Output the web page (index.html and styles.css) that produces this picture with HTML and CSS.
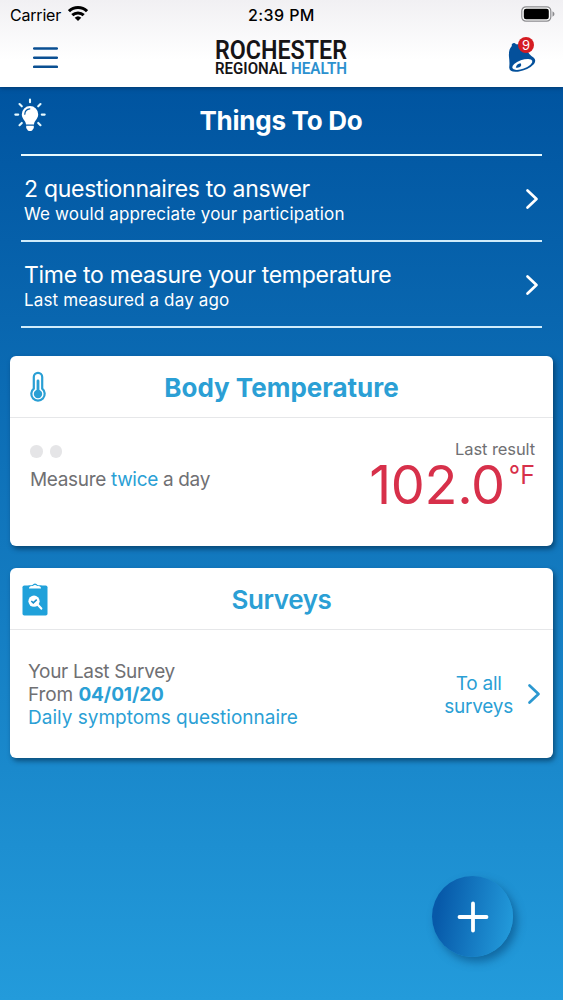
FILE: index.html
```html
<!DOCTYPE html>
<html lang="en">
<head>
  <meta charset="UTF-8">
  <meta name="viewport" content="width=device-width, initial-scale=1">
  <title>Things To Do</title>
  <link rel="stylesheet" href="styles.css">
</head>
<body>
  <header class="header">
    <div class="status-bar">
      <div class="carrier">
        <span>Carrier</span>
        <svg width="20" height="15" viewBox="0 0 20 15">
          <g fill="none" stroke="#000" stroke-width="3">
            <path d="M1 5.200a13 13 0 0 1 18 0"/>
            <path d="M4.300 9.200a8.200 8.200 0 0 1 11.400 0"/>
          </g>
          <path d="M6.700 11.800a4.800 4.800 0 0 1 6.600 0L10 15z"/>
        </svg>
      </div>
      <div class="clock">2:39 PM</div>
      <svg class="battery" width="34" height="16" viewBox="0 0 34 16">
        <rect x="0.800" y="0.800" width="29" height="14.400" rx="4.200" fill="#fff" stroke="#8b8b8e" stroke-width="1.200"/>
        <rect x="2.800" y="2.800" width="25" height="10.400" rx="2.200"/>
        <path d="M31.500 5.200q2 1 2 2.800t-2 2.800z" fill="#8b8b8e"/>
      </svg>
    </div>
    <div class="nav-bar">
      <svg class="menu" width="25" height="22" viewBox="0 0 25 22">
        <path d="M1.200 1.500h22.600M1.200 10.700h22.600M1.200 19.800h22.600" stroke="#0a4f92" stroke-width="2.600" stroke-linecap="round"/>
      </svg>
      <svg class="logo" width="134" height="40" viewBox="0 0 134 40">
        <text class="logo-text" x="0" y="21.200" font-size="26" textLength="132" lengthAdjust="spacingAndGlyphs">ROCHESTER</text>
        <text class="logo-text" x="0" y="36.400" font-size="16.500" textLength="72" lengthAdjust="spacingAndGlyphs">REGIONAL</text>
        <text class="logo-text logo-blue" x="76" y="36.400" font-size="16.500" textLength="56" lengthAdjust="spacingAndGlyphs">HEALTH</text>
      </svg>
      <div class="bell">
        <svg width="28" height="30" viewBox="0 0 28 30">
          <path d="M3.800 1.300Q6.200-1.300 8 1.300Q14 1 17.500 4.500Q20.500 11.500 25.500 14.500Q28.700 17 26 21Q20.500 27 10 28.700Q1.500 29.700 1.200 24.500Q1.800 20 1 14Q.3 6.500 3.800 3z" fill="#04509b"/>
          <ellipse cx="14.300" cy="21.400" rx="10.600" ry="4.400" transform="rotate(-20 14.300 21.400)" fill="#fff"/>
          <path d="M7.800 24.500Q8.800 20.800 12.600 20.300Q14.300 23 11.300 24.300Q9.500 25 7.800 24.500z" fill="#04509b"/>
        </svg>
        <span class="badge">9</span>
      </div>
    </div>
  </header>

  <main class="content">
    <!-- Things to do -->
    <section class="todo">
      <div class="todo-header">
        <svg class="bulb" width="32" height="34" viewBox="0 0 32 34">
          <g stroke="#e8fbff" stroke-width="2.100" stroke-linecap="round">
            <path d="M16 1.500v2.800M5.500 6l2.300 2.300M26.500 6l-2.300 2.300M1.300 16.600h2.900M27.800 16.600h2.900M5.500 27.200l2.300-2.300M26.500 27.200l-2.300-2.300"/>
          </g>
          <path d="M16 8a8.200 8.200 0 0 1 8.200 8.200c0 4.900-3.900 6.200-4.200 10.200h-8c-.3-4-4.200-5.300-4.200-10.200A8.200 8.200 0 0 1 16 8z" fill="#fff"/>
          <path d="M12.200 27.700h7.600v2.300l-1.700 2.400q-2.100 1-4.200 0L12.200 30z" fill="#fff"/>
          <path d="M10.800 16.200q.2-4.800 5-5.300" fill="none" stroke="#0056a2" stroke-width="1.200" stroke-linecap="round"/>
        </svg>
        <h1>Things To Do</h1>
      </div>
      <a class="todo-item">
        <div>
          <div class="todo-title">2 questionnaires to answer</div>
          <div class="todo-sub">We would appreciate your participation</div>
        </div>
        <svg class="chevron" width="14" height="22" viewBox="0 0 14 22"><path d="M2.500 2.500L11.500 11l-9 8.500"/></svg>
      </a>
      <a class="todo-item">
        <div>
          <div class="todo-title">Time to measure your temperature</div>
          <div class="todo-sub">Last measured a day ago</div>
        </div>
        <svg class="chevron" width="14" height="22" viewBox="0 0 14 22"><path d="M2.500 2.500L11.500 11l-9 8.500"/></svg>
      </a>
    </section>

    <!-- Body temperature -->
    <section class="card">
      <div class="card-header">
        <svg class="thermometer" width="18" height="32" viewBox="0 0 18 32">
          <path d="M4.800 6a4.200 4.200 0 0 1 8.400 0v11.700a6.700 6.700 0 1 1-8.400 0z" fill="none" stroke="#2a9fd4" stroke-width="2.200"/>
          <circle cx="9" cy="23" r="4.200" fill="#2a9fd4"/>
          <path d="M9 10v12" stroke="#2a9fd4" stroke-width="2.800" stroke-linecap="round"/>
        </svg>
        <h2 class="bold">Body Temperature</h2>
      </div>
      <div class="card-body temperature">
        <div class="schedule">
          <div class="dots"><span class="dot"></span><span class="dot"></span></div>
          <div class="measure">Measure <span class="blue">twice</span> a day</div>
        </div>
        <div class="result">
          <div class="result-label">Last result</div>
          <div class="result-value"><span class="number">102.0</span><span class="unit">°F</span></div>
        </div>
      </div>
    </section>

    <!-- Surveys -->
    <section class="card">
      <div class="card-header">
        <svg class="clipboard" width="26" height="33" viewBox="0 0 26 33">
          <rect x="0.500" y="2.500" width="25" height="30" rx="1.800" fill="#20a1da"/>
          <path d="M6.500 2.600h3.500Q13-1.500 16 2.600h3.500v3h-13z" fill="#20a1da"/>
          <path d="M7 5.600q0-2.700 2.600-2.700h1.200q2.200-1.600 4.400 0h1.200q2.600 0 2.600 2.700z" fill="#fff"/>
          <circle cx="12" cy="18.200" r="5.600" fill="#fff"/>
          <path d="M15.800 21.800l3.500 3.800" stroke="#fff" stroke-width="2.200" stroke-linecap="round"/>
          <path d="M9.300 18l2 1.900 3.400-3.300" fill="none" stroke="#168bc8" stroke-width="1.500"/>
        </svg>
        <h2>Surveys</h2>
      </div>
      <div class="card-body surveys">
        <div class="last-survey">
          <div class="survey-label">Your Last Survey</div>
          <div class="survey-date">From <b>04/01/20</b></div>
          <div class="blue">Daily symptoms questionnaire</div>
        </div>
        <a class="all-surveys">
          <span>To all<br>surveys</span>
          <svg class="chevron chevron-blue" width="14" height="22" viewBox="0 0 14 22"><path d="M2.500 2.500L11.500 11l-9 8.500"/></svg>
        </a>
      </div>
    </section>
  </main>

  <button class="add-button" aria-label="Add">
    <svg width="32" height="32" viewBox="0 0 32 32"><path d="M16 2.500v27M2.500 16h27" stroke="#fff" stroke-width="3.800" stroke-linecap="round"/></svg>
  </button>
</body>
</html>
```
FILE: styles.css
```css
* {
  box-sizing: border-box;
}
body {
  margin: 0;
  height: 1000px;
  overflow: hidden;
  font-family: Inter, "Liberation Sans", sans-serif;
  color: #707073;
  background: linear-gradient(#0054a0 87px, #239bdb 1000px);
}
h1, h2 {
  margin: 0;
}
svg {
  display: block;
  flex: none;
}
.header {
  height: 87px;
  color: #000;
  background: linear-gradient(#f1f0f3, #fff 60px);
  box-shadow: 0 1px 4px rgba(0, 30, 60, 0.5);
}
.status-bar {
  display: grid;
  grid-template-columns: 1fr 1fr 1fr;
  align-items: center;
  height: 29px;
  padding: 0 8px 0 10px;
  font-size: 16px;
}
.carrier {
  display: flex;
  align-items: center;
  gap: 7px;
  letter-spacing: -0.2px;
}
.carrier svg {
  margin-top: -2px;
}
.clock {
  padding-right: 2px;
  text-align: center;
  font-weight: 500;
  letter-spacing: 0.4px;
}
.battery {
  justify-self: end;
  margin-top: -1px;
}
.nav-bar {
  display: flex;
  height: 58px;
  padding: 0 27px 0 33px;
}
.menu {
  margin-top: 18px;
}
.logo {
  margin: 9px auto 0 157px;
  overflow: visible;
}
.logo-text {
  font-family: Roboto, sans-serif;
  font-weight: 600;
  fill: #161416;
}
.logo-blue {
  fill: #2c91cf;
}
.bell {
  position: relative;
  margin-top: 14px;
}
.badge {
  position: absolute;
  top: -6px;
  left: 10px;
  width: 16px;
  height: 16px;
  border-radius: 50%;
  background: #d51c22;
  color: #fff;
  font-size: 13px;
  line-height: 16px;
  text-align: center;
}
.content {
  padding: 0 10px;
}
.todo {
  padding: 0 11px;
  margin-bottom: 28px;
  color: #fff;
}
.todo-header {
  display: flex;
  height: 69px;
  border-bottom: 2px solid #e8faff;
}
.bulb {
  margin: 11px 0 0 -7px;
}
h1 {
  flex: 1;
  padding-right: 26px;
  font-size: 26px;
  font-weight: 650;
  line-height: 67px;
  text-align: center;
  letter-spacing: -0.25px;
}
.todo-item {
  display: flex;
  justify-content: space-between;
  height: 86px;
  padding: 20px 3px 0;
  border-bottom: 2px solid #d0ecfb;
}
.todo-title {
  font-size: 23px;
  line-height: 27px;
  letter-spacing: -0.28px;
}
.todo-sub {
  font-size: 17px;
  line-height: 22px;
  letter-spacing: 0.16px;
}
.chevron {
  margin-top: 12px;
  fill: none;
  stroke: #fff;
  stroke-width: 2.7;
  stroke-linecap: round;
  stroke-linejoin: round;
}
.chevron-blue {
  margin: -2px 0 0;
  stroke: #2b98d0;
}
.card {
  height: 190px;
  margin-bottom: 22px;
  border-radius: 6px;
  background: #fff;
  box-shadow: 2px 3px 5px rgba(0, 40, 70, 0.6);
}
.card-header {
  display: grid;
  grid-template-columns: 50px 1fr 50px;
  height: 62px;
  border-bottom: 1px solid #e6e7e9;
}
h2 {
  font-size: 26px;
  font-weight: 600;
  line-height: 63px;
  text-align: center;
  white-space: nowrap;
  letter-spacing: -0.4px;
  color: #2b9fd5;
}
.bold {
  font-weight: 650;
  letter-spacing: 0;
}
.thermometer {
  margin: 15px 0 0 19px;
}
.clipboard {
  margin: 15px 0 0 12px;
}
.card-body {
  display: flex;
  justify-content: space-between;
}
.temperature {
  padding: 22px 18px 0 20px;
}
.dots {
  display: flex;
  gap: 7px;
  padding-top: 5px;
}
.dot {
  width: 12.5px;
  height: 12.5px;
  border-radius: 50%;
  background: #e5e5e7;
}
.measure {
  margin-top: 10px;
  font-size: 19px;
  line-height: 23px;
  letter-spacing: -0.33px;
}
.blue {
  color: #2b9fd5;
}
.result {
  text-align: right;
}
.result-label {
  font-size: 16.5px;
  line-height: 18px;
  letter-spacing: -0.1px;
}
.result-value {
  display: flex;
  justify-content: flex-end;
  color: #d7304a;
}
.number {
  font-size: 54px;
  line-height: 54px;
  letter-spacing: -0.3px;
}
.unit {
  margin-left: 4px;
  font-size: 25px;
  line-height: 35px;
}
.surveys {
  padding: 30px 12px 0 18px;
  font-size: 19px;
  line-height: 23px;
}
.surveys b {
  font-weight: 650;
  color: #2b9fd5;
}
.survey-label {
  letter-spacing: -0.33px;
}
.survey-date {
  letter-spacing: -0.1px;
}
.all-surveys {
  display: flex;
  align-items: center;
  gap: 14px;
  height: 46px;
  margin-top: 12px;
  text-align: center;
  letter-spacing: -0.25px;
  color: #2b9fd5;
}
.add-button {
  position: fixed;
  right: 50px;
  bottom: 43px;
  display: flex;
  align-items: center;
  justify-content: center;
  width: 81px;
  height: 81px;
  padding: 0;
  border: 0;
  border-radius: 50%;
  background: linear-gradient(100deg, #0759a9 12%, #239bdb 95%);
  box-shadow: 4px 5px 9px rgba(0, 60, 110, 0.5);
}
```
